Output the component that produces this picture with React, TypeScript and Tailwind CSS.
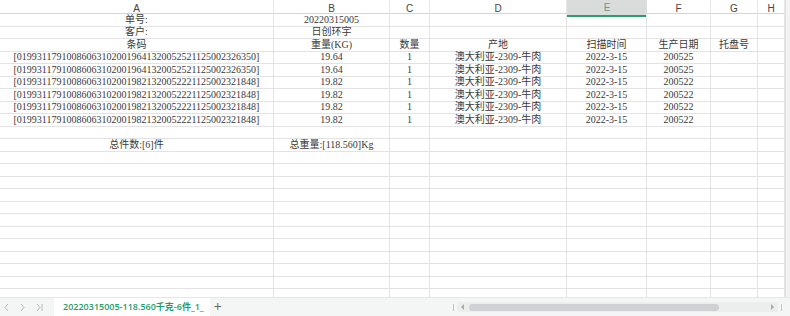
const cols = ["A", "B", "C", "D", "E", "F", "G", "H"];

const rows: string[][] = [
  ["单号:", "20220315005", "", "", "", "", "", ""],
  ["客户:", "日创环宇", "", "", "", "", "", ""],
  ["条码", "重量(KG)", "数量", "产地", "扫描时间", "生产日期", "托盘号", ""],
  ["[019931179100860631020019641320052521125002326350]", "19.64", "1", "澳大利亚-2309-牛肉", "2022-3-15", "200525", "", ""],
  ["[019931179100860631020019641320052521125002326350]", "19.64", "1", "澳大利亚-2309-牛肉", "2022-3-15", "200525", "", ""],
  ["[019931179100860631020019821320052221125002321848]", "19.82", "1", "澳大利亚-2309-牛肉", "2022-3-15", "200522", "", ""],
  ["[019931179100860631020019821320052221125002321848]", "19.82", "1", "澳大利亚-2309-牛肉", "2022-3-15", "200522", "", ""],
  ["[019931179100860631020019821320052221125002321848]", "19.82", "1", "澳大利亚-2309-牛肉", "2022-3-15", "200522", "", ""],
  ["[019931179100860631020019821320052221125002321848]", "19.82", "1", "澳大利亚-2309-牛肉", "2022-3-15", "200522", "", ""],
  ["", "", "", "", "", "", "", ""],
  ["总件数:[6]件", "总重量:[118.560]Kg", "", "", "", "", "", ""],
];

// pad the sheet with blank rows down to the tab bar
while (rows.length < 24) rows.push(["", "", "", "", "", "", "", ""]);

const gridCols = "grid grid-cols-[274px_116px_40px_137px_80px_64px_47px_1fr]";

function App() {
  return (
    <div className="w-[790px] h-[316px] bg-white flex flex-col overflow-hidden" style={{ fontFamily: '"Liberation Serif", "Noto Sans CJK SC", serif' }}>
      {/* Sheet grid */}
      <div className="flex-1 overflow-hidden flex">
        <div className="flex-1 overflow-hidden">
          {/* Column headers */}
          <div className={`${gridCols} h-[14px] border-b border-[#d6d6d6]`}>
            {cols.map((c) => (
              <div
                key={c}
                className={
                  c === "E"
                    ? "flex items-center justify-center bg-[#d9dcdb] border-b-2 border-[#2f9c6e] text-[#5f9f82] text-[10px] font-['Liberation_Sans',sans-serif]"
                    : "flex items-center justify-center border-r border-[#e6e6e6] text-[#444] text-[10px] font-['Liberation_Sans',sans-serif]"
                }
              >
                {c}
              </div>
            ))}
          </div>

          {/* Rows */}
          {rows.map((r, i) => (
            <div key={i} className={`${gridCols} h-[12.5px]`}>
              {r.map((v, j) => (
                <div
                  key={j}
                  className="flex items-center justify-center border-r border-b border-[#e3e3e3] text-[10px] leading-none text-[#3a3a3a] whitespace-nowrap overflow-visible"
                >
                  {v}
                </div>
              ))}
            </div>
          ))}
        </div>
        {/* vertical scroll gutter */}
        <div className="w-[5px] bg-[#f3f3f3] border-l border-[#e0e0e0]" />
      </div>

      {/* Sheet tabs and horizontal scrollbar */}
      <div className="h-[19px] bg-[#f4f5f5] border-t border-[#e6e6e6] flex items-center text-[#b5b5b5] font-['Open_Sans','Noto_Sans_CJK_SC',sans-serif]">
        <div className="flex items-center gap-[9px] pl-[3px] w-[54px]">
          <svg width="7" height="9" viewBox="0 0 7 9"><path d="M5 1 L2 4.5 L5 8" fill="none" stroke="#b9b9b9" strokeWidth="1" /></svg>
          <svg width="7" height="9" viewBox="0 0 7 9"><path d="M2 1 L5 4.5 L2 8" fill="none" stroke="#b9b9b9" strokeWidth="1" /></svg>
          <svg width="9" height="9" viewBox="0 0 9 9"><path d="M2 1 L5 4.5 L2 8 M7 1 V8" fill="none" stroke="#b9b9b9" strokeWidth="1" /></svg>
        </div>
        <div className="h-full bg-white flex items-center pl-[9px] pr-[6px] text-[9px] font-semibold text-[#1f9d68]">
          20220315005-118.560千克-6件_1_
        </div>
        <div className="ml-[4px] text-[#666] text-[14px] leading-none">+</div>

        <div className="flex-1" />
        <div className="flex items-center w-[337px] h-full gap-[3px]">
          <div className="w-[1px] h-[7px] bg-[#c4c4c4]" />
          <div className="flex-1 h-[10px] bg-[#eceded] rounded-[2px] flex items-center px-[3px] gap-[4px]">
            <svg width="5" height="6" viewBox="0 0 5 6"><path d="M4 0 L1 3 L4 6 Z" fill="#aaa" /></svg>
            <div className="w-[250px] h-[7px] rounded-full bg-[#cfd1d4]" />
            <div className="flex-1" />
            <svg width="5" height="6" viewBox="0 0 5 6"><path d="M1 0 L4 3 L1 6 Z" fill="#aaa" /></svg>
          </div>
          <div className="w-[1px] h-[7px] bg-[#c4c4c4] mr-[8px]" />
        </div>
      </div>
    </div>
  );
}

export default App;
